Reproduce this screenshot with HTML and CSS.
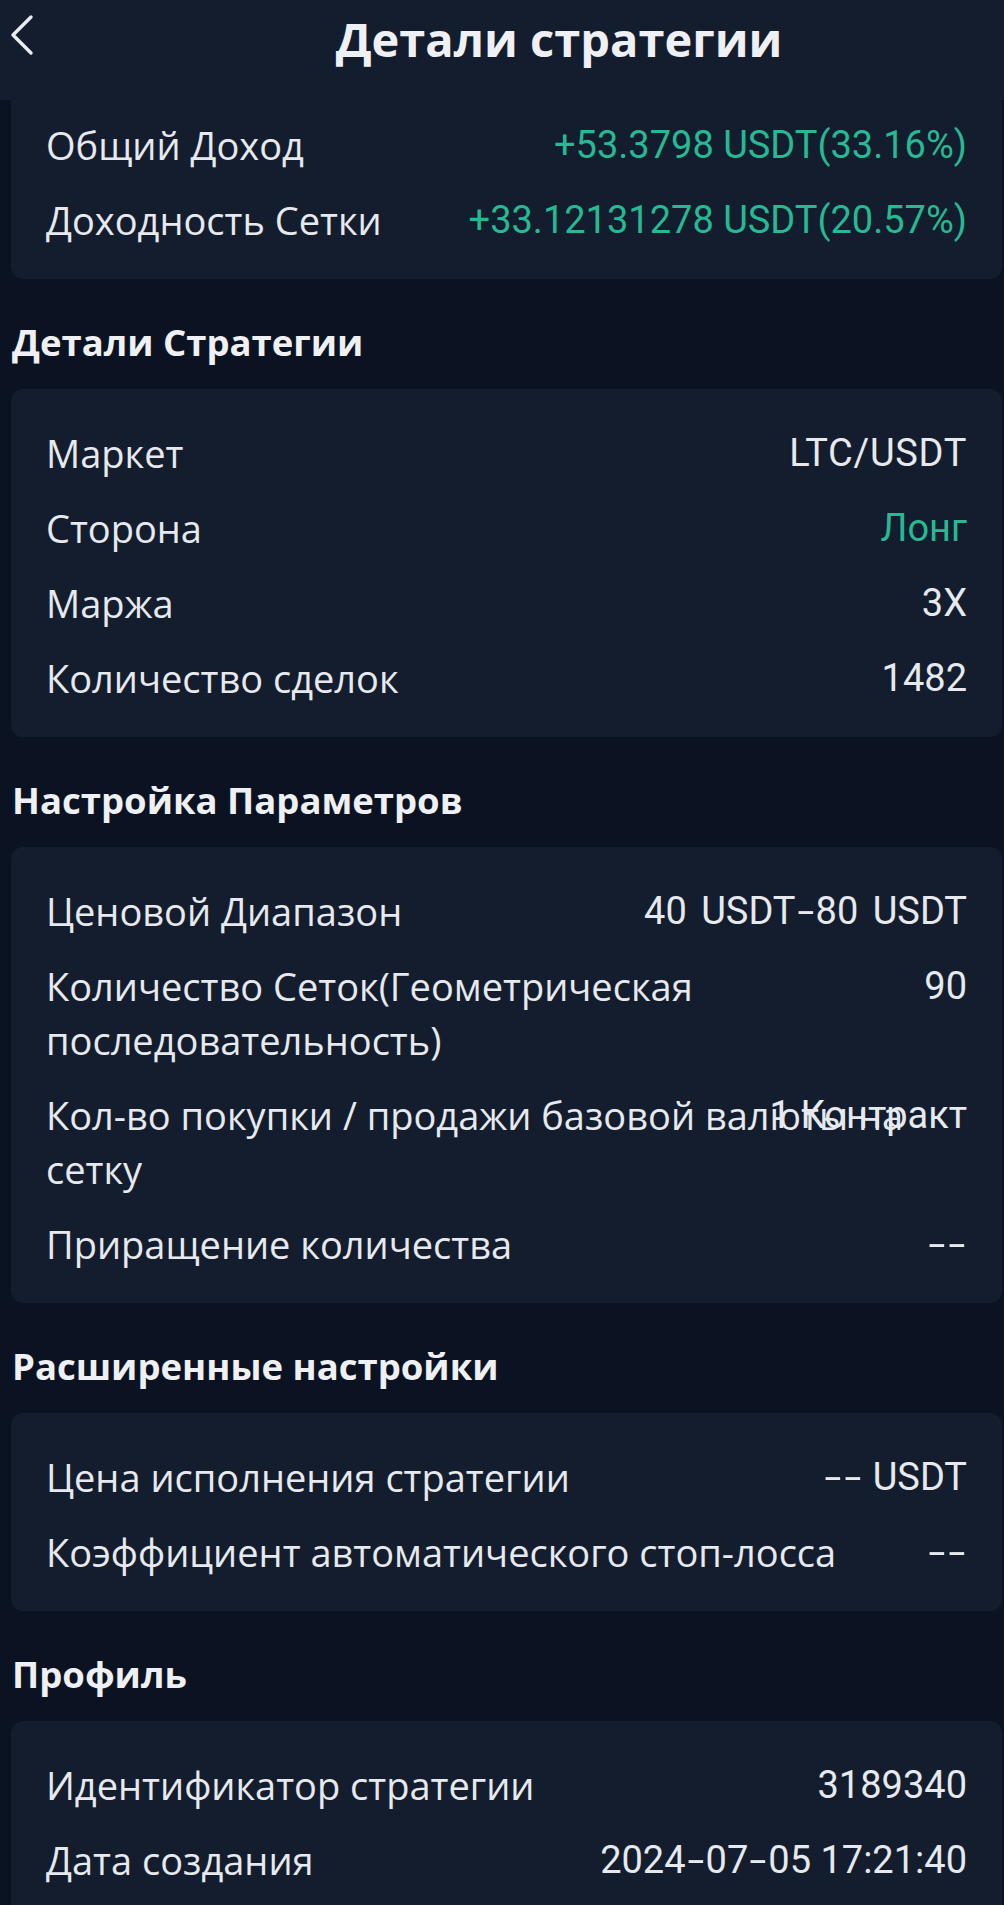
FILE: index.html
```html
<!DOCTYPE html>
<html lang="ru">
<head>
<meta charset="utf-8">
<title>Детали стратегии</title>
<link rel="stylesheet" href="styles.css">
</head>
<body>
<header class="topbar">
  <button class="back" aria-label="Назад">
    <svg width="24" height="42" viewBox="0 0 24 42"><path d="M21 3 L3 21 L21 39" fill="none" stroke="#e9ecf1" stroke-width="3.4" stroke-linecap="round" stroke-linejoin="round"/></svg>
  </button>
  <h1 class="topbar-title">Детали стратегии</h1>
</header>

<main class="content">
  <section class="card card--first">
    <div class="row"><span class="label">Общий Доход</span><span class="value value--green">+53.3798 USDT(33.16%)</span></div>
    <div class="row"><span class="label">Доходность Сетки</span><span class="value value--green">+33.12131278 USDT(20.57%)</span></div>
  </section>

  <h2 class="section-title">Детали Стратегии</h2>
  <section class="card">
    <div class="row"><span class="label">Маркет</span><span class="value value--spaced">LTC/USDT</span></div>
    <div class="row"><span class="label">Сторона</span><span class="value value--green">Лонг</span></div>
    <div class="row"><span class="label">Маржа</span><span class="value">3X</span></div>
    <div class="row"><span class="label">Количество сделок</span><span class="value">1482</span></div>
  </section>

  <h2 class="section-title">Настройка Параметров</h2>
  <section class="card">
    <div class="row"><span class="label">Ценовой Диапазон</span><span class="value value--wide">40 USDT<span class="dash">-</span>80 USDT</span></div>
    <div class="row"><span class="label">Количество Сеток(Геометрическая последовательность)</span><span class="value">90</span></div>
    <div class="row row--overlap"><span class="label">Кол-во покупки / продажи базовой валюты на сетку</span><span class="value">1 Контракт</span></div>
    <div class="row"><span class="label">Приращение количества</span><span class="value"><span class="dash">-</span><span class="dash">-</span></span></div>
  </section>

  <h2 class="section-title">Расширенные настройки</h2>
  <section class="card">
    <div class="row"><span class="label">Цена исполнения стратегии</span><span class="value"><span class="dash">-</span><span class="dash">-</span> USDT</span></div>
    <div class="row"><span class="label">Коэффициент автоматического стоп-лосса</span><span class="value"><span class="dash">-</span><span class="dash">-</span></span></div>
  </section>

  <h2 class="section-title">Профиль</h2>
  <section class="card">
    <div class="row"><span class="label">Идентификатор стратегии</span><span class="value">3189340</span></div>
    <div class="row"><span class="label">Дата создания</span><span class="value">2024<span class="dash">-</span>07<span class="dash">-</span>05 17:21:40</span></div>
  </section>
</main>
</body>
</html>
```
FILE: styles.css
```css
* { box-sizing: border-box; }
html, body { margin: 0; padding: 0; }
body {
  background: #0b1322;
  color: #e8ebf0;
  font-family: "Open Sans", Roboto, "Noto Sans", sans-serif;
  width: 1004px;
  min-height: 1905px;
  overflow: hidden;
}
.topbar {
  height: 100px;
  background: #141d2d;
  display: flex;
  align-items: flex-start;
}
.back {
  background: none;
  border: 0;
  padding: 0;
  margin: 14px 0 0 10px;
  width: 24px;
  height: 42px;
  display: flex;
}
.topbar-title {
  flex: 1;
  margin: 11px 0 0 0;
  padding-left: 80px;
  text-align: center;
  font-size: 47px;
  font-weight: 700;
  line-height: 56px;
  color: #eef0f4;
}
.content { display: flex; flex-direction: column; }
.card {
  background: #141d2d;
  margin: 0 2px 0 11px;
  border-radius: 12px;
  padding: 37px 35px 32px 35px;
  display: flex;
  flex-direction: column;
  gap: 21px;
}
.card--first {
  padding-top: 18px;
  border-top-left-radius: 0;
  border-top-right-radius: 0;
}
.section-title {
  margin: 43px 0 27px 12px;
  font-size: 36.5px;
  line-height: 40px;
  font-weight: 700;
  color: #eef0f4;
}
.row {
  display: flex;
  justify-content: space-between;
  align-items: flex-start;
  gap: 40px;
  font-size: 38px;
  line-height: 54px;
}
.label { color: #e6e9ee; }
.value {
  font-family: Roboto, "Open Sans", sans-serif;
  color: #e6e9ee;
  white-space: nowrap;
  text-align: right;
}
.value--green { color: #25b994; }
.value--spaced { letter-spacing: 0.7px; }
.value--wide { word-spacing: 5px; }
.dash {
  display: inline-block;
  width: 20px;
  text-align: center;
  transform: scaleX(1.6);
}
.row--overlap {
  display: grid;
  grid-template-columns: 1fr;
}
.row--overlap > * { grid-area: 1 / 1; }
.row--overlap .value { justify-self: end; }
```
